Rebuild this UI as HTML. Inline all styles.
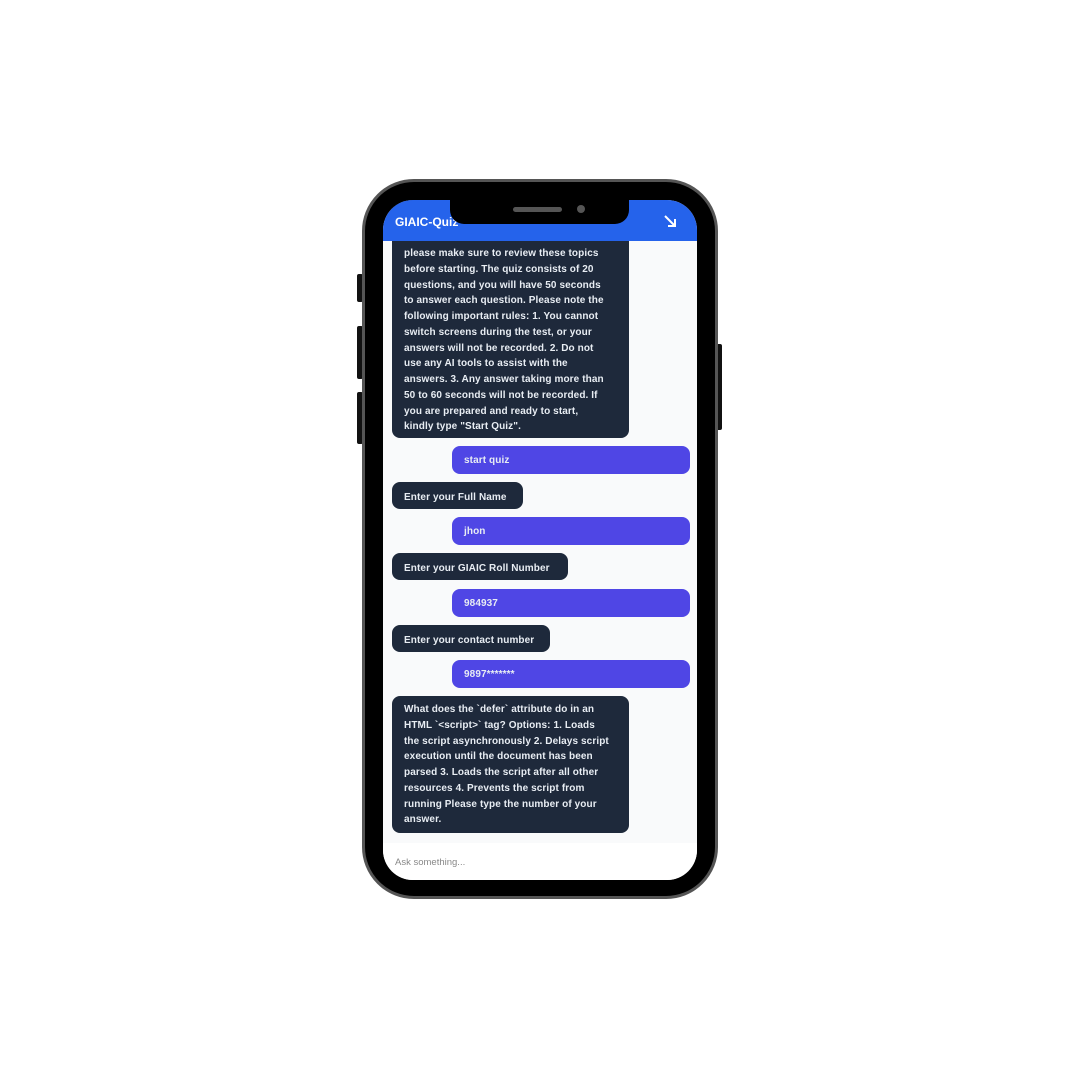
<!DOCTYPE html>
<html><head><style>
body{margin:0;width:1080px;height:1080px;background:#fff;position:relative;overflow:hidden;font-family:"Liberation Sans",Arial,sans-serif}
.a{position:absolute}
.phone{left:362px;top:179px;width:350px;height:714px;background:#000;border:3px solid #555;border-radius:52px}
.screen{left:383px;top:200px;width:314px;height:680px;border-radius:30px;overflow:hidden;background:#f9fafb}
.hdr{left:0;top:0;width:314px;height:41px;background:#2563eb;color:#fff;font-weight:bold;font-size:12px}
.b{position:absolute;border-radius:8px;color:#e8edf3;font-weight:bold;font-size:10px;letter-spacing:0.1px;line-height:15.75px;box-sizing:border-box;padding:0 12px;white-space:nowrap}
.bot{background:#1e293b;left:9px}
.usr{background:#4f46e5;left:69px;width:238px;height:28px;line-height:28px;padding-top:1px}
.s{height:27px;line-height:27px;padding-top:2px}
.btn{background:#111;border-radius:2px}
</style></head><body>
<div class="a btn" style="left:357px;top:274px;width:6px;height:28px"></div>
<div class="a btn" style="left:357px;top:326px;width:6px;height:53px"></div>
<div class="a btn" style="left:357px;top:392px;width:6px;height:52px"></div>
<div class="a btn" style="left:716px;top:344px;width:6px;height:86px"></div>
<div class="a phone"></div>
<div class="a screen">
  <div class="b bot" style="top:-10px;width:237px;height:248px;padding-top:56px">please make sure to review these topics<br>before starting. The quiz consists of 20<br>questions, and you will have 50 seconds<br>to answer each question. Please note the<br>following important rules: 1. You cannot<br>switch screens during the test, or your<br>answers will not be recorded. 2. Do not<br>use any AI tools to assist with the<br>answers. 3. Any answer taking more than<br>50 to 60 seconds will not be recorded. If<br>you are prepared and ready to start,<br>kindly type "Start Quiz".</div>
  <div class="a hdr"><span class="a" style="left:12px;top:15px">GIAIC-Quiz</span><svg class="a" style="left:280px;top:14px" width="14" height="14" viewBox="0 0 14 14"><path d="M2 2L12 12M5 12H12V5" stroke="#fff" stroke-width="2" fill="none"/></svg></div>
  <div class="b usr" style="top:246px">start quiz</div>
  <div class="b bot s" style="top:282px;width:131px">Enter your Full Name</div>
  <div class="b usr" style="top:317px">jhon</div>
  <div class="b bot s" style="top:353px;width:176px">Enter your GIAIC Roll Number</div>
  <div class="b usr" style="top:389px">984937</div>
  <div class="b bot s" style="top:425px;width:158px">Enter your contact number</div>
  <div class="b usr" style="top:460px">9897*******</div>
  <div class="b bot" style="top:496px;width:237px;height:137px;padding-top:6px">What does the `defer` attribute do in an<br>HTML `&lt;script&gt;` tag? Options: 1. Loads<br>the script asynchronously 2. Delays script<br>execution until the document has been<br>parsed 3. Loads the script after all other<br>resources 4. Prevents the script from<br>running Please type the number of your<br>answer.</div>
  <div class="a" style="left:0;top:643px;width:314px;height:37px;background:#fff"><span class="a" style="left:12px;top:14px;font-size:9.5px;color:#888">Ask something...</span></div>
</div>
<div class="a" style="left:450px;top:195px;width:179px;height:29px;background:#000;border-radius:0 0 14px 14px"></div>
<div class="a" style="left:513px;top:207px;width:49px;height:5px;background:#555;border-radius:3px"></div>
<div class="a" style="left:577px;top:205px;width:8px;height:8px;background:#555;border-radius:50%"></div>
</body></html>
